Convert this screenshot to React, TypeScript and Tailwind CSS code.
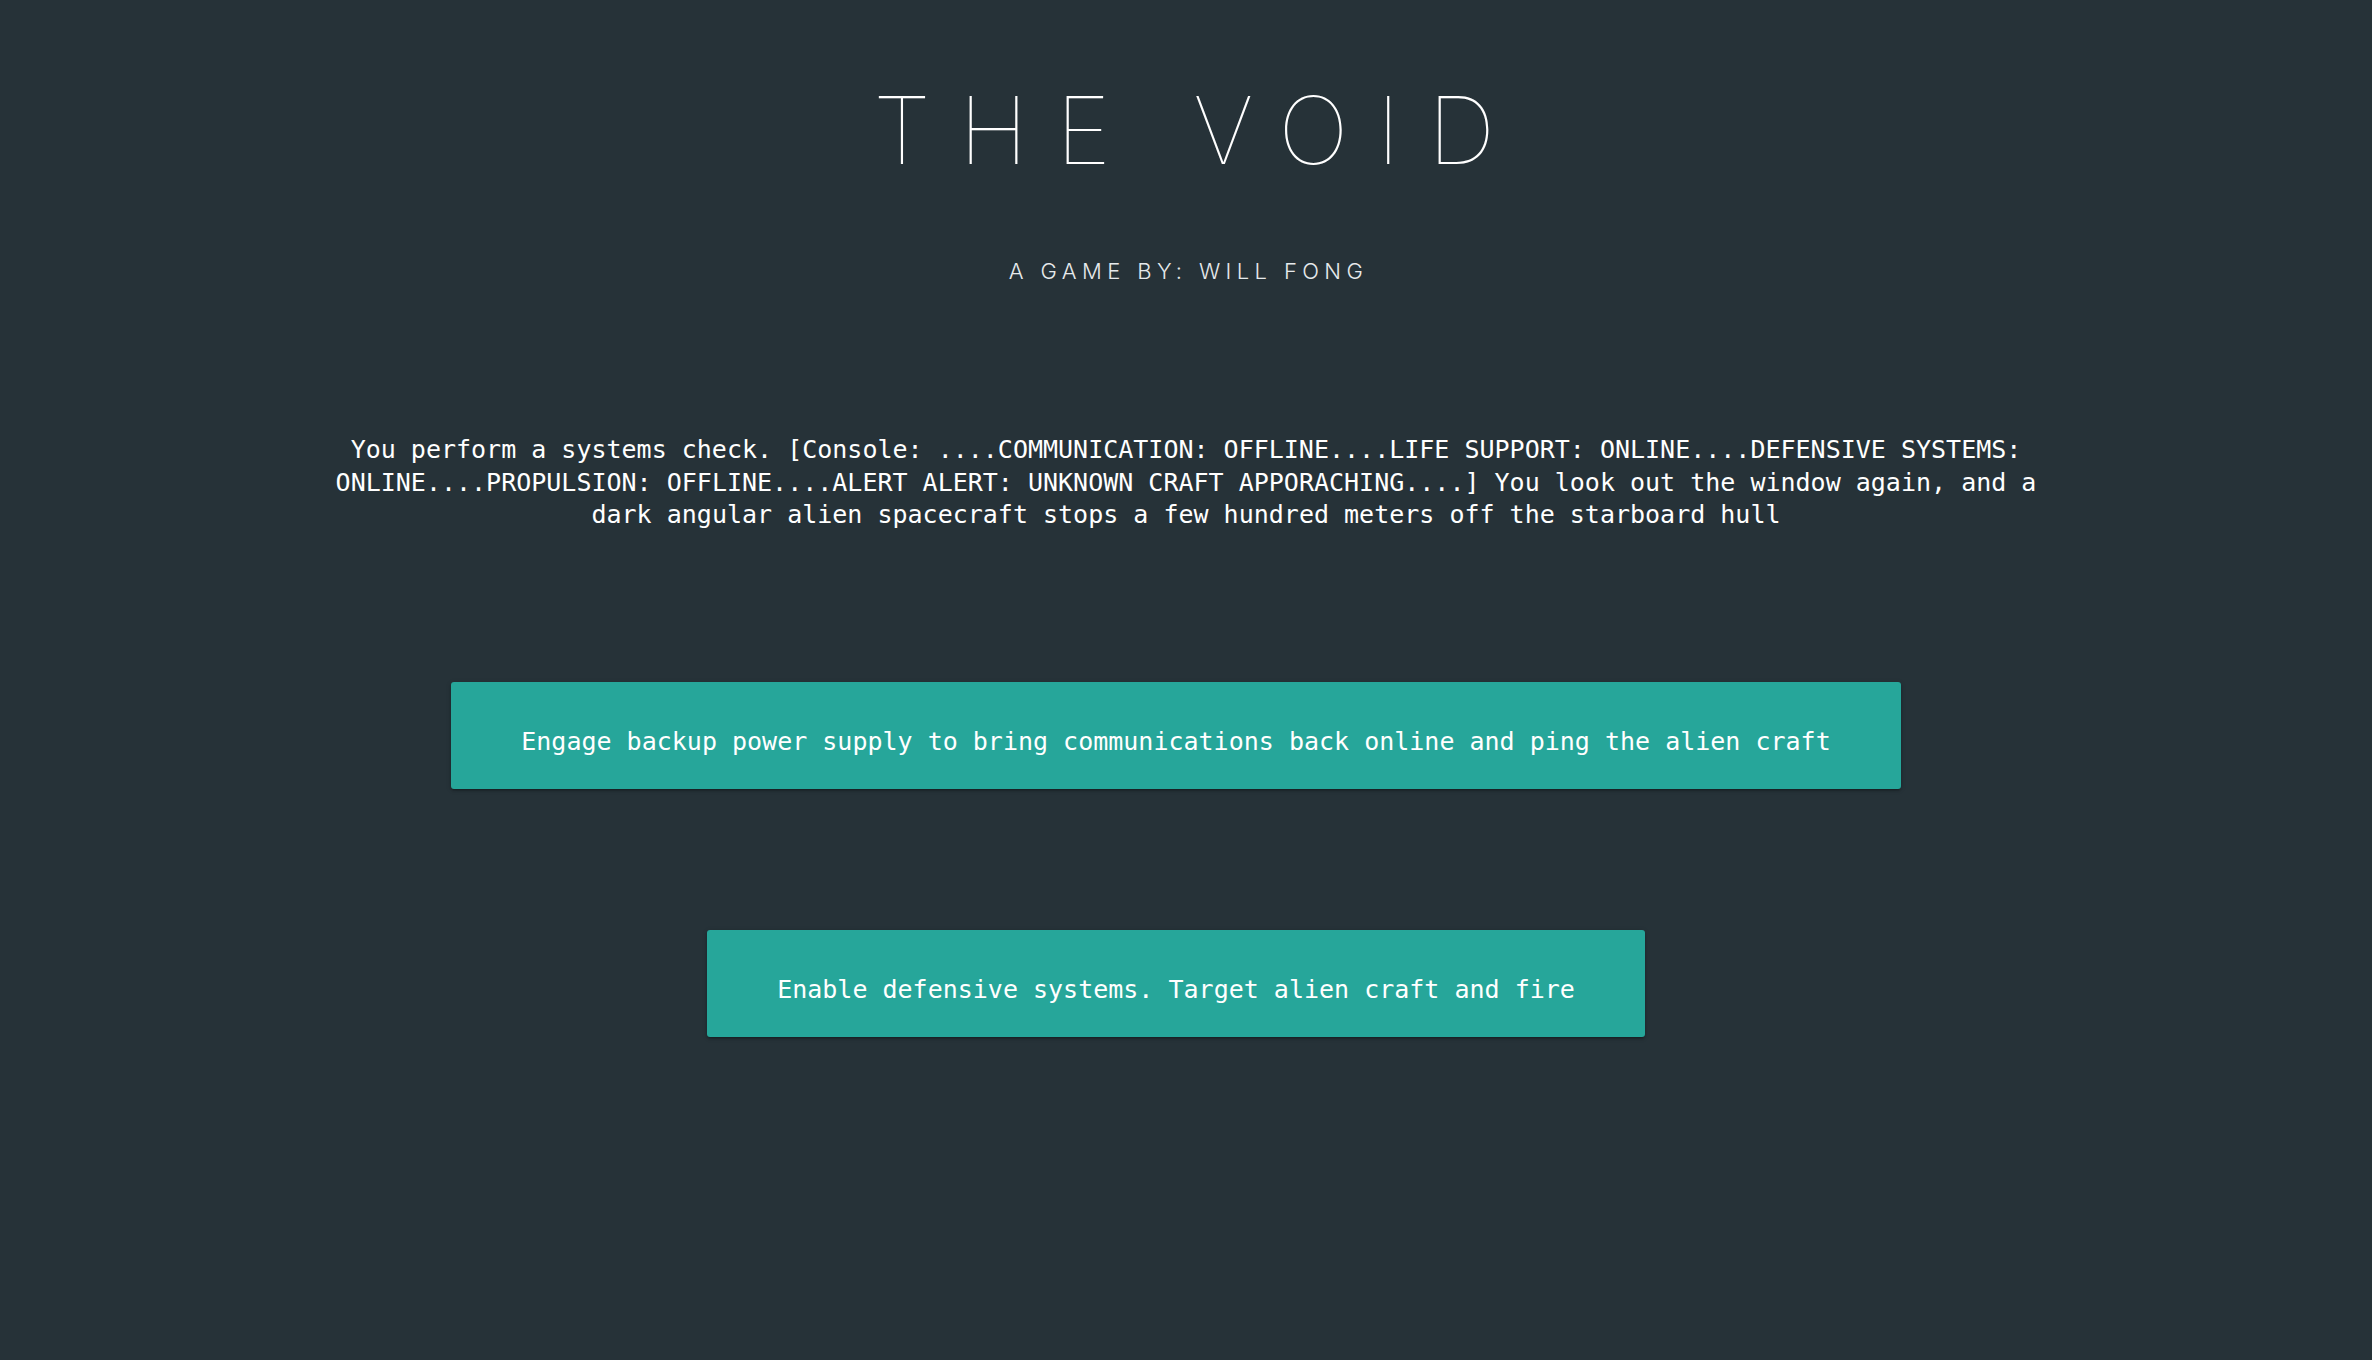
const choices = [
  'Engage backup power supply to bring communications back online and ping the alien craft',
  'Enable defensive systems. Target alien craft and fire',
];

export default function App() {
  return (
    <div className="min-h-screen bg-[#263238] flex flex-col items-center">
      {/* Title */}
      <h1 className="mt-[83px] pl-[24px] font-['Inter',sans-serif] text-[94px] leading-[94px] font-thin tracking-[28px] text-white">
        THE VOID
      </h1>
      <h2 className="mt-[83px] pl-[5px] font-['Inter',sans-serif] text-[22px] leading-[22px] font-light tracking-[5.4px] text-[#e6eaec]">
        A GAME BY: WILL FONG
      </h2>

      {/* Story text */}
      <p className="mt-[152px] max-w-[1720px] text-center font-['DejaVu_Sans_Mono',monospace] text-[25px] leading-[32.5px] text-white">
        You perform a systems check. [Console: ....COMMUNICATION: OFFLINE....LIFE SUPPORT: ONLINE....DEFENSIVE SYSTEMS: ONLINE....PROPULSION: OFFLINE....ALERT ALERT: UNKNOWN CRAFT APPORACHING....] You look out the window again, and a dark angular alien spacecraft stops a few hundred meters off the starboard hull
      </p>

      {/* Choices */}
      <div className="mt-[150px] flex flex-col items-center gap-[141px] mr-[20px]">
        {choices.map((c) => (
          <button
            key={c}
            className="px-[70px] pt-[43px] pb-[31px] rounded-[3px] bg-[#26a69a] font-['DejaVu_Sans_Mono',monospace] text-[25px] leading-[33px] text-white shadow-[0_2px_2px_0_rgba(0,0,0,0.14),0_3px_1px_-2px_rgba(0,0,0,0.12),0_1px_5px_0_rgba(0,0,0,0.2)]"
          >
            {c}
          </button>
        ))}
      </div>
    </div>
  );
}
